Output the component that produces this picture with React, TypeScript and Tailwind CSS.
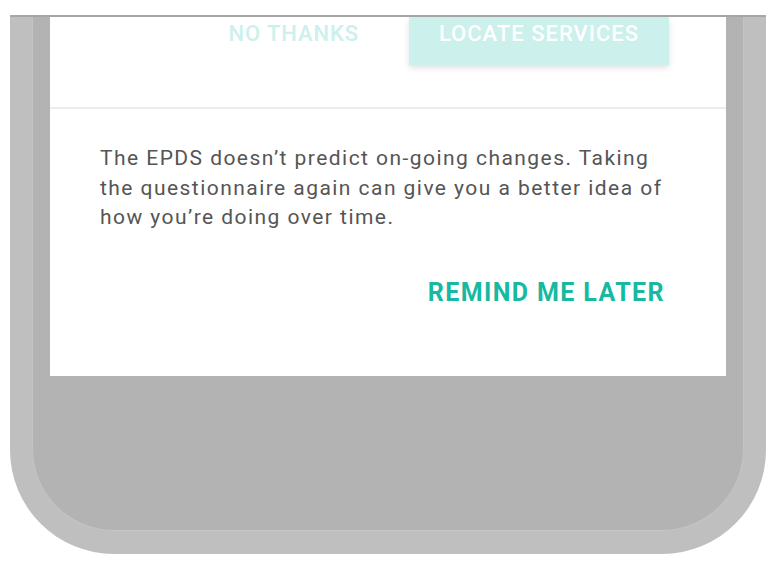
// App.tsx
// Bottom half of a phone mockup showing an EPDS reminder card.

const font = { fontFamily: "Roboto, 'Liberation Sans', sans-serif" };

export default function App() {
  return (
    <div className="w-[776px] h-[581px] bg-white pt-[15px] pl-[10px]" style={font}>
      {/* Phone body */}
      <div className="w-[756px] h-[539px] border-t-2 border-[#a6a6a6] rounded-b-[104px] bg-[#bfbfbf] px-[22px] pb-[23px] flex">
        {/* Inner bezel */}
        <div className="flex-1 rounded-b-[82px] bg-[#b3b3b3] border-x border-b border-[#c4c4c4] px-[17px]">
          {/* Screen */}
          <div className="h-[359px] bg-white flex flex-col">
            {/* Previous card's actions, faded */}
            <div className="h-[92px] flex items-start justify-end pr-[57px] border-b-2 border-[#ececec]">
              <span className="mt-[4px] mr-[50px] text-[22px] leading-[26px] font-medium tracking-[0.9px] text-[#ccf0ec]">
                NO THANKS
              </span>
              <div className="w-[260px] h-[48px] bg-[#ccf0ec] shadow-[0_3px_6px_rgba(0,0,0,0.12)] flex justify-center pt-[4px]">
                <span className="text-[22px] leading-[26px] font-medium tracking-[1px] text-white">
                  LOCATE SERVICES
                </span>
              </div>
            </div>

            {/* Reminder */}
            <p className="pt-[35px] px-[50px] text-[21px] leading-[29.5px] tracking-[1.45px] text-[#555555]">
              The EPDS doesn’t predict on-going changes. Taking the questionnaire
              again can give you a better idea of how you’re doing over time.
            </p>
            <div className="mt-[45px] flex justify-end pr-[61px]">
              <button className="text-[25px] leading-[30px] font-bold tracking-[1.4px] text-[#16b9a1]">
                REMIND ME LATER
              </button>
            </div>
          </div>
        </div>
      </div>
    </div>
  );
}
